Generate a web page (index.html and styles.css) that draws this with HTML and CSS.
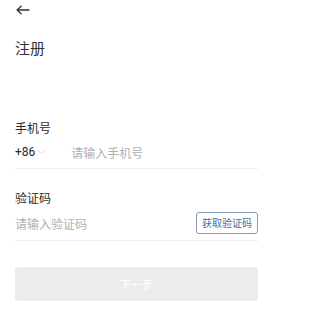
FILE: index.html
```html
<!DOCTYPE html>
<html lang="zh">
<head>
<meta charset="utf-8">
<link rel="stylesheet" href="styles.css">
</head>
<body>
<div class="page">
  <div class="topbar">
    <svg class="back" width="14" height="10" viewBox="0 0 14 10"><path d="M13.5 5H1.2M5.5 0.8L1.2 5l4.3 4.2" fill="none" stroke="#333" stroke-width="1.3"/></svg>
  </div>
  <h1 class="title">注册</h1>
  <div class="field field-phone">
    <div class="label">手机号</div>
    <div class="row">
      <span class="cc">+86</span>
      <svg class="chev" width="7" height="5" viewBox="0 0 7 5"><path d="M0.5 0.8L3.5 3.8 6.5 0.8" fill="none" stroke="#ccc" stroke-width="0.8"/></svg>
      <span class="ph ph-phone">请输入手机号</span>
    </div>
  </div>
  <div class="field field-code">
    <div class="label">验证码</div>
    <div class="row">
      <span class="ph">请输入验证码</span>
      <span class="getcode">获取验证码</span>
    </div>
  </div>
  <div class="next">下一步</div>
</div>
</body>
</html>
```
FILE: styles.css
```css
html, body { margin: 0; padding: 0; background: #fff; }
body { font-family: "Noto Sans CJK SC", "Noto Sans", sans-serif; color: #333; }
.page { width: 270px; box-sizing: border-box; padding: 0 12px 0 15px; }
.topbar { height: 18px; display: flex; align-items: center; padding-left: 1px; padding-top: 1px; box-sizing: border-box; }
.back { display: block; }
.title { margin: 0; padding-top: 19px; font-size: 15px; line-height: 22px; font-weight: normal; color: #333; }
.field { border-bottom: 1px solid #eee; }
.field-phone { margin-top: 61px; }
.field-code { margin-top: 21px; }
.label { font-size: 12px; line-height: 16px; color: #2a2a2a; }
.row { display: flex; align-items: center; height: 32px; }
.field-code .row { height: 34px; }
.cc { font-family: "Roboto", "Noto Sans", sans-serif; font-size: 12px; color: #2a2a2a; }
.chev { margin-left: 3px; }
.ph { font-size: 12px; color: #b0b0b0; }
.ph-phone { margin-left: 26px; }
.getcode { margin-left: auto; font-size: 10px; line-height: 20px; color: #3d72a6; border: 1px solid #7fa0c0; border-radius: 3px; padding: 0 5px; }
.next { margin-top: 26px; height: 34px; background: #ececec; border-radius: 3px; color: #fff; font-size: 11px; display: flex; align-items: center; justify-content: center; }
```
